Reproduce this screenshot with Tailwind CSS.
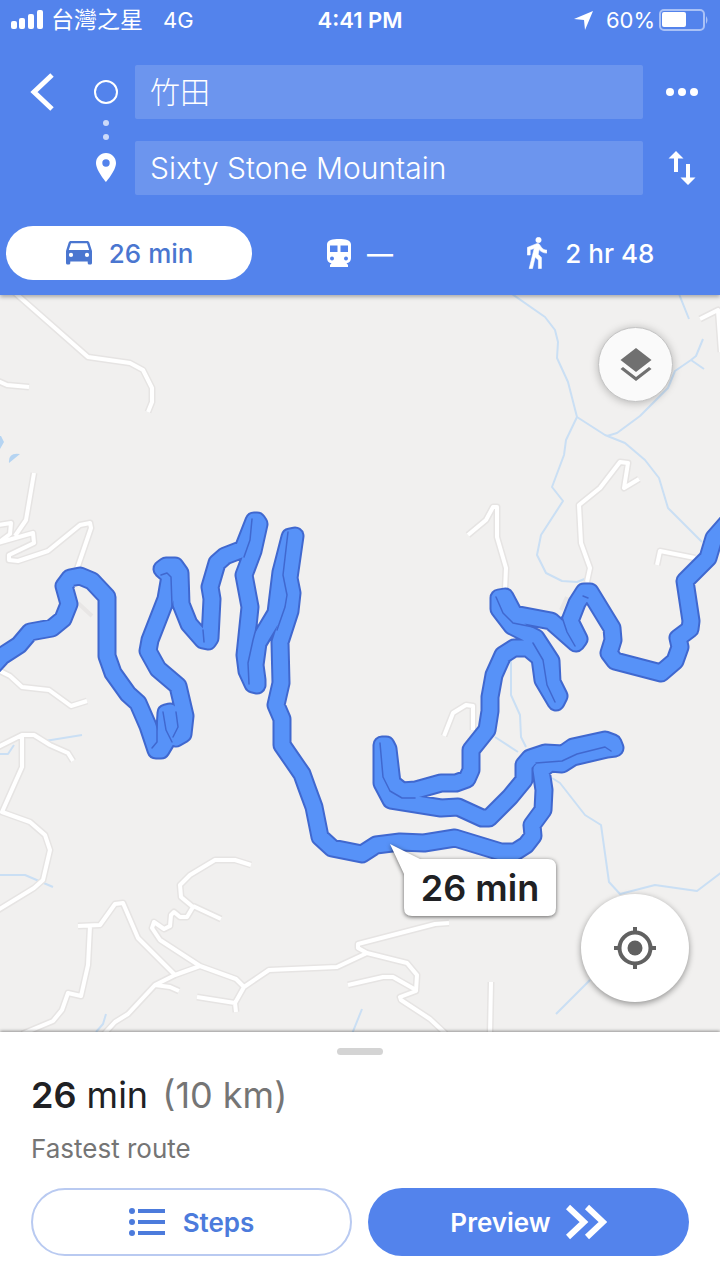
<!DOCTYPE html>
<html lang="en">
<head>
    <meta charset="UTF-8">
    <meta name="viewport" content="width=device-width, initial-scale=1.0">
    <title>Directions to Sixty Stone Mountain</title>
    <script src="https://cdn.jsdelivr.net/npm/@tailwindcss/browser@4"></script>
</head>
<body class="min-h-screen flex flex-col bg-white font-['Inter','Noto_Sans_CJK_TC',sans-serif] text-[#202124]">

    <header class="relative z-10 bg-[#5383ec] text-white pb-[15px] shadow-[0_2px_4px_rgba(0,0,0,0.3)]">
        <!-- Status bar -->
        <div class="grid grid-cols-[1fr_auto_1fr] items-center h-10 px-[11px] text-[22px]">
            <div class="flex items-center">
                <svg class="w-8 h-5" viewBox="0 0 32 20" fill="currentColor"><rect x="0" y="11" width="6" height="8" rx="2"/><rect x="8" y="8" width="6" height="11" rx="2"/><rect x="17" y="4" width="6" height="15" rx="2"/><rect x="26" y="0" width="6" height="19" rx="2"/></svg>
                <span class="ml-2 text-[23px]">台灣之星</span>
                <span class="ml-5">4G</span>
            </div>
            <span class="font-semibold">4:41 PM</span>
            <div class="flex items-center justify-end">
                <svg class="w-5 h-5 mr-3" viewBox="0 0 20 20" fill="currentColor"><path d="M19 1 0 9l10 1 1 10z"/></svg>
                <span>60%</span>
                <svg class="w-[50px] h-[22px] ml-1" viewBox="0 0 50 22"><rect x="1" y="1" width="44" height="20" rx="4" fill="none" stroke="#fff" stroke-opacity=".5" stroke-width="2"/><rect x="3" y="3" width="24" height="15" rx="2" fill="#fff"/><path d="M47 7q3 4 0 8z" fill="#fff" fill-opacity=".5"/></svg>
            </div>
        </div>

        <!-- Start and destination -->
        <div class="flex pt-[25px]">
            <div class="w-[84px]">
                <button class="flex items-center w-full h-[54px] pl-[30px]" aria-label="Back">
                    <svg class="w-6 h-10" viewBox="0 0 24 40" fill="none" stroke="currentColor" stroke-width="5"><path d="M22 3 4 20l18 17"/></svg>
                </button>
            </div>
            <div class="w-[51px] pr-2 flex flex-col items-center">
                <div class="flex items-center h-[54px]">
                    <svg class="w-6 h-6" viewBox="0 0 24 24" fill="none" stroke="currentColor" stroke-width="2"><circle cx="12" cy="12" r="11"/></svg>
                </div>
                <div class="flex flex-col items-center justify-center gap-2 h-[22px]">
                    <span class="w-[6px] h-[6px] rounded-full bg-white/70"></span>
                    <span class="w-[6px] h-[6px] rounded-full bg-white/70"></span>
                </div>
                <div class="flex items-center h-[54px]">
                    <svg class="w-5 h-[30px]" viewBox="0 0 20 30" fill="currentColor" fill-rule="evenodd"><path d="M10 0C4.400 0 0 4.500 0 10c0 7.500 10 19 10 19s10-11.500 10-19c0-5.500-4.400-10-10-10zm0 13.700a3.700 3.700 0 1 1 0-7.400 3.700 3.700 0 0 1 0 7.400z"/></svg>
                </div>
            </div>
            <div class="flex-1 flex flex-col gap-[22px]">
                <input type="text" value="竹田" aria-label="Starting point" class="w-full h-[54px] px-[15px] pb-1 rounded-xs bg-white/15 text-[30px] font-light">
                <input type="text" value="Sixty Stone Mountain" aria-label="Destination" class="w-full h-[54px] px-[15px] rounded-xs bg-white/15 text-[30px] font-light">
            </div>
            <div class="w-[77px] flex flex-col gap-[22px]">
                <button class="flex items-center justify-center h-[54px]" aria-label="More options">
                    <svg class="w-8 h-2" viewBox="0 0 32 8" fill="currentColor"><circle cx="4" cy="4" r="4"/><circle cx="16" cy="4" r="4"/><circle cx="28" cy="4" r="4"/></svg>
                </button>
                <button class="flex items-center justify-center h-[54px]" aria-label="Swap start and destination">
                    <svg class="w-7 h-[34px]" viewBox="0 0 28 34" fill="currentColor"><path d="M8 0 0.500 7.500H6V21h4V7.500h5.500zM20 34l7.500-7.500H22V13h-4v13.500h-5.500z"/></svg>
                </button>
            </div>
        </div>

        <!-- Travel modes -->
        <div class="grid grid-cols-[8fr_7fr_8fr] px-[6px] mt-[31px] text-[26px]">
            <button class="flex items-center justify-center gap-4 h-[54px] rounded-full bg-white font-medium text-[#4a76d0]">
                <svg class="w-7 h-6" viewBox="0 0 28 24" fill="currentColor" fill-rule="evenodd"><path d="M24.300 1.500C24 .6 23.200 0 22.200 0H5.800C4.800 0 4 .6 3.700 1.500L1 10v12c0 .9.600 1.500 1.500 1.500h1.300c.9 0 1.500-.6 1.500-1.500v-1.500h17.400V22c0 .9.600 1.500 1.500 1.500h1.300c.9 0 1.500-.6 1.500-1.500V10zM6 16a2 2 0 1 1 0-4.200A2 2 0 0 1 6 16zm16 0a2 2 0 1 1 0-4.200 2 2 0 0 1 0 4.200zM3.800 9 6 2.200h16L24.200 9z"/></svg>
                26 min
            </button>
            <button class="flex items-center justify-center gap-4 h-[54px] font-medium" aria-label="Transit">
                <svg class="w-6 h-7" viewBox="0 0 24 28" fill="currentColor" fill-rule="evenodd"><path d="M12 0C6 0 0 .8 0 5.500V19c0 3 2 5 4.500 5L3 26v2h18v-2l-1.500-2c2.500 0 4.500-2 4.500-5V5.500C24 .8 18 0 12 0zM5 21.500a2 2 0 1 1 0-4 2 2 0 0 1 0 4zM10.500 13H3V6.500h7.500zM19 21.500a2 2 0 1 1 0-4 2 2 0 0 1 0 4zM21 13h-7.500V6.500H21z"/></svg>
                <span>—</span>
            </button>
            <button class="flex items-center justify-center gap-[18px] h-[54px] font-medium">
                <svg class="w-5 h-8" viewBox="0 0 20 32" fill="currentColor" stroke="currentColor" stroke-width=".6"><circle cx="11.500" cy="3" r="2.700"/><path d="M7.200 11.500 2.200 31.500h3.300l2.700-11.500 3.200 3v8.500h3V20.500l-3.200-3.200.9-4.700c2 2.300 4.500 3.500 7.700 3.500v-3c-2.500 0-4.500-1.300-5.700-3.200L12.600 7.700C11.900 6.700 10.700 6.300 9.600 6.700L.3 10.500V18h2.900v-5.300z"/></svg>
                2 hr 48
            </button>
        </div>
    </header>

    <main class="relative flex-1 min-h-[500px] overflow-hidden bg-[#f1f0ef]">
        <svg class="absolute inset-0 w-full h-full" viewBox="0 295 720 737" preserveAspectRatio="xMidYMid slice" fill="none" stroke-linejoin="round">
            <defs>
                <g id="roads">
                    <path d="M14 292 88 357 130 363 143 370 152 388V402L148 412M-2 381 7 385 29 387M34 473 26 520 15 536M-2 525 11 523 10 534-2 543M-2 543 33 533 34 543 9 555V560L18 561 48 551 80 525 90 523 91 528 77 569M0 671 10 676 22 687 49 690 71 706 87 701"/>
                    <path d="M-2 747 22 735H34L50 745 68 753 73 761M22 735V767L2 812 30 822 45 835 50 850 43 880 34 888-2 910M78 926 100 925 115 904 123 903 138 938 175 975M90 926 88 965 81 996 68 993 62 1010 53 1021 22 1034"/>
                    <path d="M104 1034 115 1022 128 1014 155 985 175 975 200 966 236 979 244 987 269 970 337 967 367 953 407 963 417 975 416 991 400 997 401 1000 430 1019 446 1034M155 985 170 987 179 991M244 987 235 1003 197 997M235 1003 236 1012"/>
                    <path d="M200 966 160 940 152 928 154 922 164 929 170 926 171 915 174 912 180 917H187L193 907 181 897 180 885 190 875 215 860H235L251 865M193 906 221 919M367 953 358 948V944L435 924 449 923M348 985 383 977H393L416 990M491 982 490 1034"/>
                    <path d="M700 319 718 310 721 352M639 479 624 488 628 463 620 462 600 488 579 505 581 543 590 568 587 582M468 535 486 520 493 507H497V537L506 568 505 590M657 565 660 551 695 558M444 736 453 713 466 705 473 706V730"/>
                </g>
                <path id="route" d="M-10 669 2 656 19 645 30 632 52 628 63 619 69 604 64 586 70 578 80 576 92 581 107 597V656L113 673 128 694 138 703 148 726 156 750 161 750 167 740 165 730 166 713 170 712 173 735 176 738 183 734 185 716 178 686 158 669 148 651 150 640 166 599 170 576 162 569 166 566 175 566 180 573 181 604 189 624 203 640 208 641 210 638 212 599 210 587 217 563 225 556 243 549 254 521 257 521 259 524 253 551 244 575 250 607 245 655 247 671 253 684 257 685 257 680 255 665 258 643 276 613 281 572 290 537 295 536 289 578 292 593 290 611 280 642 281 683 276 705 282 719V745L302 774 307 788 314 807 320 837 332 848 362 854 376 845 400 842 424 843 455 838 501 852H515L526 845 533 836 532 825 543 810 544 790 541 770 550 763 562 764 573 757 607 749 615 748 613 743 605 740 573 747 563 754 545 753 530 758 524 765V780L510 797 489 818 482 818 458 807 441 808 391 800 382 783 382 745 386 745 388 749 392 783 402 791 416 790 441 783 456 783 467 779 471 770V750L487 730 490 711V697L494 675 503 655 514 648H528L540 658 543 680 556 702 559 696 552 682 551 661 536 638 512 626 499 609 499 598 505 597 514 614 551 621 576 643 579 639 570 621 577 603 584 592 590 592 612 628 613 640 609 653 615 661 661 673 675 661 680 647 678 638 690 629 691 621 685 581 708 558 714 538 728 522"/>
            </defs>

            <!-- Water -->
            <g fill="#b5d4f2"><path d="M-2 436 1 436 4 442 0 449-2 448zM9 463Q8 452 20 454z"/></g>
            <g stroke="#cadff4" stroke-width="2">
                <path d="M512 294 545 317 555 330 558 342 557 358 568 382 577 417 566 440 564 455 552 487 563 501 541 535 537 555 546 573 562 581 577 582 587 578M577 417 605 435 625 443 645 460 659 478 668 508 702 542M607 436 617 433 640 416 668 388 675 371 691 360 704 369M691 360 696 356 703 339M679 294 689 319"/>
                <path d="M-2 754H8L14 745M45 741 82 735M-2 875H25L53 887M362 1009 352 1034M106 1014 103 1024 96 1032M511 658V695L520 715 521 737 526 747M495 737 518 752M552 778 560 783 585 815 601 825 609 882 620 894 655 885 697 891 722 872M590 980 556 1014M40 621H52"/>
            </g>

            <!-- Roads: grey casing, then white fill -->
            <path d="M78 603 92 616M561 610 567 597" stroke="#e8e6e5" stroke-width="4"/>
            <use href="#roads" stroke="#e6e4e3" stroke-width="7"/>
            <use href="#roads" stroke="#fff" stroke-width="4"/>

            <!-- Route -->
            <use href="#route" stroke="#4068cf" stroke-width="19"/>
            <use href="#route" stroke="#5792f8" stroke-width="15"/>
            <path stroke="#4068cf" stroke-width="1.500" stroke-linecap="round" d="M152 748 157 742V722M163 712 166 730 172 742M173 737 178 727 176 712M161 575 167 573 171 577 172 606M204 642 203 630M252 519 250 540 244 557M249 684 248 663 253 640 257 625M288 532 283 575 287 595 285 607 277 630M380 743 383 777 390 791 402 798H415M536 763 562 761 577 754 605 747 611 751M496 597 503 613 513 623 533 627M533 643 543 660 547 685 555 702M562 617 567 632 575 646M583 596 588 598"/>

            <!-- Travel time callout -->
            <path class="drop-shadow-[0_1px_2px_rgba(0,0,0,0.6)]" fill="#fff" d="M390 844 420 859H548Q556 859 556 867V908Q556 916 548 916H412Q404 916 404 908V874z"/>
            <text x="480" y="901" text-anchor="middle" fill="#202124" class="text-[36px] font-semibold">26 min</text>
        </svg>

        <button class="absolute top-8 right-[47px] flex items-center justify-center w-[75px] h-[75px] rounded-full bg-[#fafafa] border border-[#c4c4c4] shadow-[0_1px_8px_rgba(0,0,0,0.25)]" aria-label="Map layers">
            <svg class="w-8 h-[34px]" viewBox="0 0 32 34" fill="#707070"><path d="M16 0 31.500 12 16 24 .5 12z"/><path d="m.5 21 2.500-2 13 10 13-10 2.500 2L16 33z"/></svg>
        </button>
        <button class="absolute bottom-[30px] right-[31px] flex items-center justify-center w-[108px] h-[108px] rounded-full bg-white shadow-[0_2px_6px_rgba(0,0,0,0.4)]" aria-label="My location">
            <svg class="w-[42px] h-[42px]" viewBox="0 0 42 42" fill="none" stroke="#616161" stroke-width="4"><circle cx="21" cy="21" r="15.500"/><circle cx="21" cy="21" r="7.500" fill="#616161" stroke="none"/><path d="M21 0v6M21 36v6M0 21h6M36 21h6"/></svg>
        </button>
    </main>

    <section class="relative z-10 bg-white px-[31px] pt-4 pb-6 shadow-[0_-1px_3px_rgba(0,0,0,0.4)]">
        <div class="w-[46px] h-[7px] mx-auto rounded-full bg-[#d4d4d4]"></div>
        <h1 class="mt-4 text-[36px] leading-[48px]"><span class="font-semibold">26</span> min <span class="ml-1 text-[#757575]">(10 km)</span></h1>
        <p class="mt-3 text-[26px] leading-[36px] text-[#757575]">Fastest route</p>
        <div class="grid grid-cols-2 gap-4 mt-[21px] text-[26px] font-semibold">
            <button class="flex items-center justify-center gap-[18px] h-[68px] rounded-full border-2 border-[#b9caf1] text-[#4c7bdc]">
                <svg class="w-9 h-7" viewBox="0 0 36 28" fill="currentColor"><circle cx="3" cy="3" r="3"/><circle cx="3" cy="14" r="3"/><circle cx="3" cy="25" r="3"/><path d="M9 1h27v4H9zM9 12h27v4H9zM9 23h27v4H9z"/></svg>
                Steps
            </button>
            <button class="flex items-center justify-center gap-[15px] h-[68px] rounded-full bg-[#5383ec] text-white">
                Preview
                <svg class="w-[41px] h-9" viewBox="0 0 41 36" fill="none" stroke="currentColor" stroke-width="6"><path d="m2 3 16 15L2 33M21 3l16 15-16 15"/></svg>
            </button>
        </div>
    </section>

</body>
</html>
